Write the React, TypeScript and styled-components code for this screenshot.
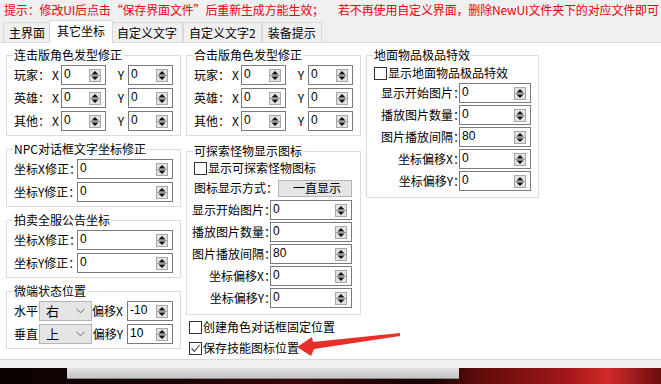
import React from "react";
import styled, { createGlobalStyle } from "styled-components";

const GlobalStyle = createGlobalStyle`
  html, body {
    margin: 0;
    padding: 0;
    background: #f0f0f0;
  }
  body {
    font-family: "Noto Sans CJK SC", "Noto Sans", sans-serif;
    font-size: 12px;
    line-height: 14px;
    color: #000;
  }
`;

const Window = styled.div`
  position: relative;
  width: 661px;
  height: 384px;
  overflow: hidden;
  background: #f0f0f0;
`;

const Notice = styled.div`
  height: 20px;
  display: flex;
  align-items: center;
  gap: 14px;
  padding-left: 4px;
  color: #e8000b;
  white-space: nowrap;
  letter-spacing: -0.15px;
`;

const TabBar = styled.div`
  height: 22px;
  display: flex;
  align-items: flex-end;
  padding-left: 3px;
  position: relative;
  z-index: 1;
`;

const Tab = styled.div<{ $active?: boolean }>`
  box-sizing: border-box;
  height: ${(p) => (p.$active ? 23 : 20)}px;
  margin: ${(p) => (p.$active ? "0 -2px -1px" : "0")};
  padding: ${(p) => (p.$active ? "0 7px 2px" : "0 5px")};
  display: flex;
  align-items: center;
  border: 1px solid #d9d9d9;
  border-bottom: none;
  background: ${(p) => (p.$active ? "#fff" : "#f0f0f0")};
  position: relative;
  z-index: ${(p) => (p.$active ? 2 : 0)};
`;

const Panel = styled.div`
  position: relative;
  box-sizing: border-box;
  height: 318px;
  background: #fff;
  border-top: 1px solid #d9d9d9;
  border-bottom: 1px solid #d9d9d9;
  display: flex;
  align-items: flex-start;
  gap: 4px;
  padding: 5px 0 0 6px;
`;

const Column = styled.div<{ $w: number; $gap: number }>`
  width: ${(p) => p.$w}px;
  flex-shrink: 0;
  display: flex;
  flex-direction: column;
  gap: ${(p) => p.$gap}px;
  & + & {
    margin-left: ${(p) => (p.$w < 175 ? 1 : 0)}px;
  }
`;

const Group = styled.fieldset`
  margin: 0;
  padding: 0 7px 5px 7px;
  border: 1px solid #dcdcdc;
  min-width: 0;
`;

const Legend = styled.legend`
  padding: 0 1px;
  margin-left: -1px;
  line-height: 14px;
`;

const Rows = styled.div<{ $gap: number; $top: number; $bottom?: number }>`
  display: flex;
  flex-direction: column;
  gap: ${(p) => p.$gap}px;
  padding-top: ${(p) => p.$top}px;
  margin-bottom: ${(p) => (p.$bottom ?? 0) - 1}px;
`;

const Row = styled.div`
  display: flex;
  align-items: center;
  height: 20px;
  white-space: nowrap;
`;

const Label = styled.div<{ $w: number; $right?: boolean }>`
  width: ${(p) => p.$w}px;
  flex-shrink: 0;
  display: flex;
  justify-content: ${(p) => (p.$right ? "flex-end" : "flex-start")};
  white-space: nowrap;
  font-feature-settings: "halt";
`;

const Axis = styled.div<{ $w: number; $right?: boolean }>`
  width: ${(p) => p.$w}px;
  flex-shrink: 0;
  box-sizing: border-box;
  text-align: ${(p) => (p.$right ? "right" : "left")};
  padding: ${(p) => (p.$right ? "0 4px 0 0" : "0 0 0 2px")};
`;

const SpinBox = styled.div<{ $w: number }>`
  box-sizing: border-box;
  width: ${(p) => p.$w}px;
  height: 20px;
  flex-shrink: 0;
  border: 1px solid #7a7a7a;
  background: #fff;
  display: flex;
  align-items: center;
  padding: 0 4px 0 2px;
  font-family: "Liberation Sans", Arial, sans-serif;
  font-size: 12px;
`;

const SpinValue = styled.span`
  flex: 1;
  margin-top: -2px;
`;

const SpinButton = styled.span`
  box-sizing: border-box;
  width: 12px;
  height: 13px;
  border: 1px solid #a8a8a8;
  background: #e2e2e2;
  display: flex;
`;

const Combo = styled.div<{ $w: number; $h: number; $pad: number }>`
  box-sizing: border-box;
  width: ${(p) => p.$w}px;
  height: ${(p) => p.$h}px;
  flex-shrink: 0;
  border: 1px solid #b4b4b4;
  background: #e5e5e5;
  display: flex;
  align-items: center;
  padding: 0 6px 0 ${(p) => p.$pad}px;
  font-size: ${(p) => (p.$h > 18 ? 13 : 12)}px;
`;

const ComboText = styled.span`
  flex: 1;
`;

const CheckRow = styled.label<{ $indent?: number }>`
  display: flex;
  align-items: center;
  gap: 1px;
  height: 16px;
  padding-left: ${(p) => p.$indent ?? 0}px;
  white-space: nowrap;
`;

const Box = styled.span`
  box-sizing: border-box;
  width: 13px;
  height: 13px;
  border: 1px solid #333;
  background: #fff;
  display: flex;
  align-items: center;
  justify-content: center;
`;

const Loose = styled.div`
  display: flex;
  flex-direction: column;
  gap: 5px;
  margin-top: -4px;
`;

const Arrow = styled.svg`
  position: absolute;
  left: 290px;
  top: 326px;
`;

const Backdrop = styled.div`
  margin-top: 8px;
  height: 16px;
  background: linear-gradient(
    90deg,
    #0a0202 0%,
    #1a0404 25%,
    #3a0606 45%,
    #150303 65%,
    #5c0b0b 72%,
    #a5171a 86%,
    #d22a2a 92%,
    #6a0d0d 100%
  );
`;

const ScrollBar = styled.div`
  margin-left: 67px;
  width: 392px;
  height: 10px;
  background: linear-gradient(#e2e2e2, #c4c4c4);
  border-bottom: 1px solid #8a8a8a;
`;

function Spin({ value, w }: { value: string; w: number }) {
  return (
    <SpinBox $w={w}>
      <SpinValue>{value}</SpinValue>
      <SpinButton>
        <svg width="10" height="11" viewBox="0 0 10 11">
          <path d="M1.5 4.5 L5 1 L8.5 4.5Z" fill="#111" />
          <line x1="0" y1="5.5" x2="10" y2="5.5" stroke="#9c9c9c" />
          <path d="M1.5 6.5 L5 10 L8.5 6.5Z" fill="#111" />
        </svg>
      </SpinButton>
    </SpinBox>
  );
}

function Check({ checked, text, indent }: { checked?: boolean; text: string; indent?: number }) {
  return (
    <CheckRow $indent={indent}>
      <Box>
        {checked && (
          <svg width="11" height="11" viewBox="0 0 11 11">
            <polyline points="1.5,5.5 4.5,8.5 9.5,2" fill="none" stroke="#444" strokeWidth="1.1" />
          </svg>
        )}
      </Box>
      {text}
    </CheckRow>
  );
}

function Chevron() {
  return (
    <svg width="9" height="6" viewBox="0 0 9 6">
      <polyline points="0.5,0.8 4.5,4.8 8.5,0.8" fill="none" stroke="#6a6a6a" />
    </svg>
  );
}

const xyRows = ["玩家", "英雄", "其他"];

const frameRows = [
  { label: "显示开始图片：", value: "0" },
  { label: "播放图片数量：", value: "0" },
  { label: "图片播放间隔：", value: "80" },
  { label: "坐标偏移X：", value: "0" },
  { label: "坐标偏移Y：", value: "0" },
];

const tabs = ["主界面", "其它坐标", "自定义文字", "自定义文字2", "装备提示"];

function XYGroup({ title }: { title: string }) {
  return (
    <Group>
      <Legend>{title}</Legend>
      <Rows $gap={3} $top={3}>
        {xyRows.map((name) => (
          <Row key={name}>
            <Label $w={36}>{name}：</Label>
            <Axis $w={11}>X</Axis>
            <Spin value="0" w={45} />
            <Axis $w={22} $right>
              Y
            </Axis>
            <Spin value="0" w={45} />
          </Row>
        ))}
      </Rows>
    </Group>
  );
}

function OffsetGroup({ title }: { title: string }) {
  return (
    <Group>
      <Legend>{title}</Legend>
      <Rows $gap={3} $top={3}>
        <Row>
          <Label $w={63}>坐标X修正：</Label>
          <Spin value="0" w={96} />
        </Row>
        <Row>
          <Label $w={63}>坐标Y修正：</Label>
          <Spin value="0" w={96} />
        </Row>
      </Rows>
    </Group>
  );
}

function FrameRows({ labelW, inputW }: { labelW: number; inputW: number }) {
  return (
    <>
      {frameRows.map((r) => (
        <Row key={r.label}>
          <Label $w={labelW} $right>
            {r.label}
          </Label>
          <Spin value={r.value} w={inputW} />
        </Row>
      ))}
    </>
  );
}

export default function App() {
  return (
    <>
      <GlobalStyle />
      <Window>
        <Notice>
          <span>提示：修改UI后点击“保存界面文件”后重新生成方能生效；</span>
          <span>若不再使用自定义界面，删除NewUI文件夹下的对应文件即可</span>
        </Notice>
        <TabBar>
          {tabs.map((t) => (
            <Tab key={t} $active={t === "其它坐标"}>
              {t}
            </Tab>
          ))}
        </TabBar>
        <Panel>
          <Column $w={175} $gap={6}>
            <XYGroup title="连击版角色发型修正" />
            <OffsetGroup title="NPC对话框文字坐标修正" />
            <OffsetGroup title="拍卖全服公告坐标" />
            <Group>
              <Legend>微端状态位置</Legend>
              <Rows $gap={3} $top={3}>
                <Row>
                  <Label $w={25}>水平</Label>
                  <Combo $w={53} $h={20} $pad={6}>
                    <ComboText>右</ComboText>
                    <Chevron />
                  </Combo>
                  <Axis $w={35} $right>
                    偏移X
                  </Axis>
                  <Spin value="-10" w={46} />
                </Row>
                <Row>
                  <Label $w={25}>垂直</Label>
                  <Combo $w={53} $h={20} $pad={6}>
                    <ComboText>上</ComboText>
                    <Chevron />
                  </Combo>
                  <Axis $w={35} $right>
                    偏移Y
                  </Axis>
                  <Spin value="10" w={46} />
                </Row>
              </Rows>
            </Group>
          </Column>
          <Column $w={175} $gap={8}>
            <XYGroup title="合击版角色发型修正" />
            <Group>
              <Legend>可探索怪物显示图标</Legend>
              <Rows $gap={2} $top={2} $bottom={2}>
                <Check text="显示可探索怪物图标" />
                <Row>
                  <Label $w={84}>图标显示方式：</Label>
                  <Combo $w={74} $h={17} $pad={14}>
                    <ComboText>一直显示</ComboText>
                  </Combo>
                </Row>
                <FrameRows labelW={76} inputW={82} />
              </Rows>
            </Group>
            <Loose>
              <Check text="创建角色对话框固定位置" indent={3} />
              <Check checked text="保存技能图标位置" indent={3} />
            </Loose>
          </Column>
          <Column $w={173} $gap={6}>
            <Group>
              <Legend>地面物品极品特效</Legend>
              <Rows $gap={2} $top={3} $bottom={2}>
                <Check text="显示地面物品极品特效" />
                <FrameRows labelW={85} inputW={72} />
              </Rows>
            </Group>
          </Column>
        </Panel>
        <Backdrop>
          <ScrollBar />
        </Backdrop>
        <Arrow width="115" height="34" viewBox="0 0 115 34">
          <polygon points="7,21 22,11 23,16 110,7 110,10 24,23 21,30" fill="#e8302b" />
        </Arrow>
      </Window>
    </>
  );
}
